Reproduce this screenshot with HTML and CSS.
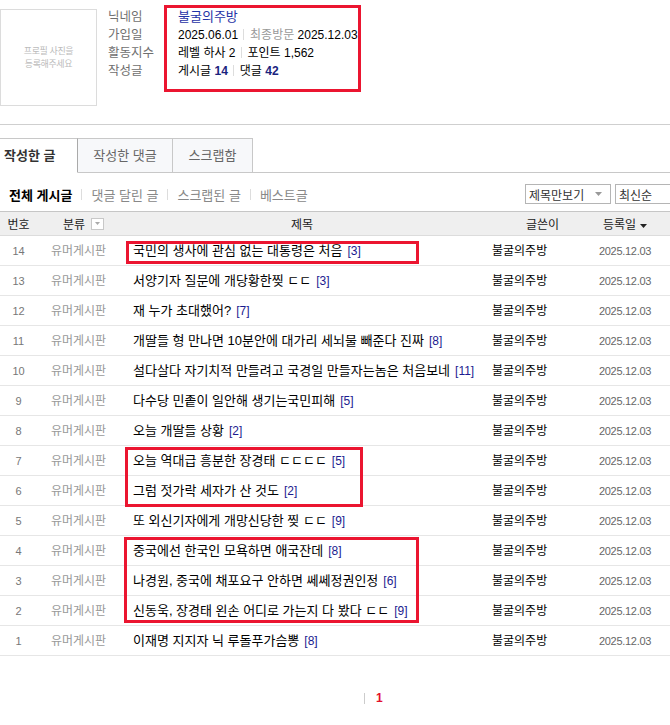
FILE: index.html
```html
<!DOCTYPE html>
<html lang="ko">
<head>
    <meta charset="UTF-8">
    <meta name="viewport" content="width=device-width, initial-scale=1.0">
    <title>불굴의주방 - 작성한 글</title>
    <link rel="stylesheet" href="styles.css">
</head>
<body>
    <div class="page">
        <div class="profile">
            <div class="photo">프로필 사진을<br>등록해주세요</div>
            <dl class="info">
                <dt>닉네임</dt>
                <dd><a class="nick">불굴의주방</a></dd>
                <dt>가입일</dt>
                <dd>2025.06.01<span class="bar"></span><span class="sub">최종방문</span> 2025.12.03</dd>
                <dt>활동지수</dt>
                <dd>레벨 하사 2<span class="bar"></span>포인트 1,562</dd>
                <dt>작성글</dt>
                <dd>게시글 <b>14</b><span class="bar"></span>댓글 <b>42</b></dd>
            </dl>
        </div>

        <div class="tabs">
            <div class="tab on">작성한 글</div>
            <div class="tab t2">작성한 댓글</div>
            <div class="tab t3">스크랩함</div>
        </div>

        <div class="filter">
            <a class="on">전체 게시글</a><span class="sep"></span>
            <a>댓글 달린 글</a><span class="sep"></span>
            <a>스크랩된 글</a><span class="sep"></span>
            <a>베스트글</a>
            <div class="sort">
                <div class="select view">제목만보기
                    <svg width="7" height="4" viewBox="0 0 7 4"><path d="M0 0h7L3.5 4z" fill="#999"/></svg>
                </div>
                <div class="select order">최신순</div>
            </div>
        </div>

        <div class="board">
            <div class="head">
                <div class="c-num">번호</div>
                <div class="c-cat">분류<span class="cat-btn"><svg width="5" height="3" viewBox="0 0 5 3"><path d="M0 0h5L2.5 3z" fill="#aaa"/></svg></span></div>
                <div class="c-title">제목</div>
                <div class="c-writer">글쓴이</div>
                <div class="c-date">등록일<svg width="7" height="4" viewBox="0 0 7 4"><path d="M0 0h7L3.5 4z" fill="#222"/></svg></div>
            </div>
            <div class="row"><div class="c-num">14</div><div class="c-cat">유머게시판</div><div class="c-title">국민의 생사에 관심 없는 대통령은 처음<span class="cmt">[3]</span></div><div class="c-writer">불굴의주방</div><div class="c-date">2025.12.03</div></div>
            <div class="row"><div class="c-num">13</div><div class="c-cat">유머게시판</div><div class="c-title">서양기자 질문에 개당황한찢 ㄷㄷ<span class="cmt">[3]</span></div><div class="c-writer">불굴의주방</div><div class="c-date">2025.12.03</div></div>
            <div class="row"><div class="c-num">12</div><div class="c-cat">유머게시판</div><div class="c-title">재 누가 초대했어?<span class="cmt">[7]</span></div><div class="c-writer">불굴의주방</div><div class="c-date">2025.12.03</div></div>
            <div class="row"><div class="c-num">11</div><div class="c-cat">유머게시판</div><div class="c-title">개딸들 형 만나면 10분안에 대가리 세뇌물 빼준다 진짜<span class="cmt">[8]</span></div><div class="c-writer">불굴의주방</div><div class="c-date">2025.12.03</div></div>
            <div class="row"><div class="c-num">10</div><div class="c-cat">유머게시판</div><div class="c-title">설다살다 자기치적 만들려고 국경일 만들자는놈은 처음보네<span class="cmt">[11]</span></div><div class="c-writer">불굴의주방</div><div class="c-date">2025.12.03</div></div>
            <div class="row"><div class="c-num">9</div><div class="c-cat">유머게시판</div><div class="c-title">다수당 민좉이 일안해 생기는국민피해<span class="cmt">[5]</span></div><div class="c-writer">불굴의주방</div><div class="c-date">2025.12.03</div></div>
            <div class="row"><div class="c-num">8</div><div class="c-cat">유머게시판</div><div class="c-title">오늘 개딸들 상황<span class="cmt">[2]</span></div><div class="c-writer">불굴의주방</div><div class="c-date">2025.12.03</div></div>
            <div class="row"><div class="c-num">7</div><div class="c-cat">유머게시판</div><div class="c-title">오늘 역대급 흥분한 장경태 ㄷㄷㄷㄷ<span class="cmt">[5]</span></div><div class="c-writer">불굴의주방</div><div class="c-date">2025.12.03</div></div>
            <div class="row"><div class="c-num">6</div><div class="c-cat">유머게시판</div><div class="c-title">그럼 젓가락 세자가 산 것도<span class="cmt">[2]</span></div><div class="c-writer">불굴의주방</div><div class="c-date">2025.12.03</div></div>
            <div class="row"><div class="c-num">5</div><div class="c-cat">유머게시판</div><div class="c-title">또 외신기자에게 개망신당한 찢 ㄷㄷ<span class="cmt">[9]</span></div><div class="c-writer">불굴의주방</div><div class="c-date">2025.12.03</div></div>
            <div class="row"><div class="c-num">4</div><div class="c-cat">유머게시판</div><div class="c-title">중국에선 한국인 모욕하면 애국잔데<span class="cmt">[8]</span></div><div class="c-writer">불굴의주방</div><div class="c-date">2025.12.03</div></div>
            <div class="row"><div class="c-num">3</div><div class="c-cat">유머게시판</div><div class="c-title">나경원, 중국에 채포요구 안하면 쎄쎄정권인정<span class="cmt">[6]</span></div><div class="c-writer">불굴의주방</div><div class="c-date">2025.12.03</div></div>
            <div class="row"><div class="c-num">2</div><div class="c-cat">유머게시판</div><div class="c-title">신동욱, 장경태 왼손 어디로 가는지 다 봤다 ㄷㄷ<span class="cmt">[9]</span></div><div class="c-writer">불굴의주방</div><div class="c-date">2025.12.03</div></div>
            <div class="row"><div class="c-num">1</div><div class="c-cat">유머게시판</div><div class="c-title">이재명 지지자 닉 루돌푸가슴뽕<span class="cmt">[8]</span></div><div class="c-writer">불굴의주방</div><div class="c-date">2025.12.03</div></div>
        </div>

        <div class="paging"><span class="sep"></span><strong>1</strong></div>

        <!-- red highlight frames drawn over the list -->
        <div class="mark mark-profile"></div>
        <div class="mark mark-row14"></div>
        <div class="mark mark-row7"></div>
        <div class="mark mark-row4"></div>
    </div>
</body>
</html>
```

FILE: styles.css
```css
body {
    margin: 0;
    font-family: "Liberation Sans", "Noto Sans CJK KR", sans-serif;
    font-size: 12px;
    color: #000;
    background: #fff;
    overflow: hidden;
}

.page {
    position: relative;
    width: 670px;
}

/* profile */
.profile {
    display: flex;
    height: 125px;
    box-sizing: border-box;
    padding-top: 9px;
    border-bottom: 1px solid #cfcfcf;
}

.photo {
    width: 97px;
    height: 97px;
    box-sizing: border-box;
    border: 1px solid #dcdcdc;
    display: flex;
    align-items: center;
    justify-content: center;
    text-align: center;
    font-size: 9px;
    line-height: 13px;
    letter-spacing: -0.4px;
    color: #bbb;
}

.info {
    margin: -1px 0 0 11px;
    display: grid;
    grid-template-columns: 70px auto;
    grid-auto-rows: 18px;
    line-height: 18px;
}

.info dt {
    color: #6f6f6f;
    font-size: 12.5px;
}

.info dd {
    margin: 0;
}

.nick {
    color: #1f33a6;
    font-size: 13px;
}

.info b {
    color: #1a237e;
}

.sub {
    color: #999;
}

.bar {
    display: inline-block;
    width: 1px;
    height: 11px;
    background: #ddd;
    margin: 0 6px 0 5px;
    vertical-align: -1px;
}

/* tabs */
.tabs {
    display: flex;
    margin-top: 13px;
    height: 35px;
    box-sizing: border-box;
    border-bottom: 1px solid #c8c8c8;
}

.tab {
    height: 35px;
    box-sizing: border-box;
    border: 1px solid #c8c8c8;
    border-left: 0;
    background: #f7f8fa;
    color: #666;
    font-size: 13px;
    line-height: 33px;
    text-align: center;
}

.tab.on {
    width: 78px;
    padding-left: 4px;
    text-align: left;
    background: #fff;
    border-bottom-color: #fff;
    border-right-color: #aaa;
    color: #333;
    font-weight: bold;
}

.tab.t2 {
    width: 95px;
}

.tab.t3 {
    width: 80px;
}

/* filter links + sort selects */
.filter {
    display: flex;
    align-items: center;
    height: 38px;
    box-sizing: border-box;
    padding: 4px 0 0 9px;
}

.filter a {
    color: #888;
    font-size: 13px;
}

.filter a.on {
    color: #000;
    font-weight: bold;
}

.sep {
    display: inline-block;
    width: 1px;
    height: 11px;
    background: #ddd;
    margin: 0 9px;
}

.sort {
    margin-left: auto;
    margin-right: -16px;
    display: flex;
    gap: 4px;
}

.select {
    height: 20px;
    box-sizing: border-box;
    border: 1px solid #b5b5b5;
    display: flex;
    align-items: center;
    padding-left: 3px;
    color: #333;
}

.select svg {
    margin: 0 8px 0 auto;
}

.select.view {
    width: 86px;
}

.select.order {
    width: 71px;
}

/* list */
.head,
.row {
    display: grid;
    grid-template-columns: 37px 83px 350px 110px 90px;
    align-items: center;
    box-sizing: border-box;
}

.head {
    height: 25px;
    border-top: 1px solid #c6c6c6;
    border-bottom: 1px solid #dcdcdc;
    background: #efefef;
    color: #222;
}

.row {
    height: 30px;
    border-bottom: 1px solid #e6e6e6;
    line-height: 16px;
}

.c-num {
    text-align: center;
}

.row .c-num {
    font-size: 11px;
    color: #777;
}

.row .c-cat {
    text-align: center;
    color: #999;
}

.head .c-cat {
    display: flex;
    align-items: center;
    padding-left: 26px;
}

.cat-btn {
    width: 13px;
    height: 12px;
    box-sizing: border-box;
    margin-left: 6px;
    border: 1px solid #c8c8c8;
    background: #fff;
    display: flex;
    align-items: center;
    justify-content: center;
}

.c-title {
    padding-left: 13px;
    white-space: nowrap;
}

.row .c-title {
    font-size: 13px;
}

.head .c-title {
    padding-left: 14px;
    text-align: center;
}

.cmt {
    margin-left: 5px;
    font-size: 12px;
    color: #1b1b8f;
}

.row .c-writer {
    padding-left: 22px;
}

.head .c-writer {
    padding-left: 56px;
}

.c-date {
    text-align: center;
}

.row .c-date {
    font-size: 11px;
    letter-spacing: -0.3px;
    color: #666;
}

.head .c-date svg {
    margin-left: 4px;
    vertical-align: 1px;
}

/* paging */
.paging {
    display: flex;
    align-items: center;
    padding: 35px 0 0 364px;
    line-height: 14px;
}

.paging .sep {
    margin: 0 11px 0 0;
    background: #ccc;
}

.paging strong {
    color: #e3102c;
}

/* highlight frames */
.mark {
    position: absolute;
    box-sizing: border-box;
    border: 3px solid #eb1530;
}

.mark-profile {
    left: 164px;
    top: 5px;
    width: 197px;
    height: 87px;
}

.mark-row14 {
    left: 126px;
    top: 241px;
    width: 293px;
    height: 23px;
}

.mark-row7 {
    left: 125px;
    top: 447px;
    width: 238px;
    height: 60px;
}

.mark-row4 {
    left: 124px;
    top: 537px;
    width: 295px;
    height: 86px;
}
```
